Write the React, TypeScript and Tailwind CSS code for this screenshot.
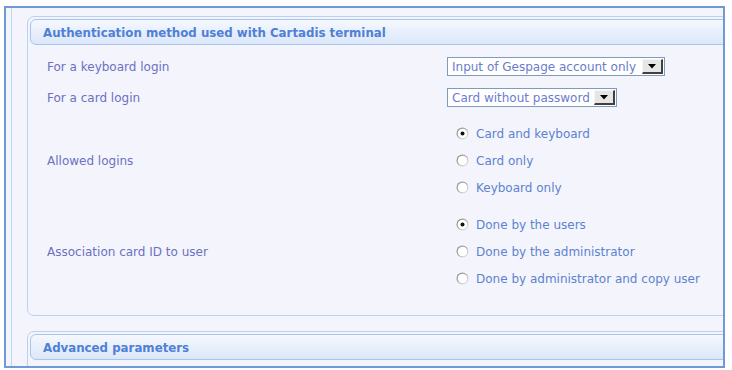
import React from 'react';

const font = { fontFamily: '"DejaVu Sans", Verdana, sans-serif' };

function Radio({ checked }: { checked?: boolean }) {
  return (
    <svg width="13" height="13" viewBox="0 0 13 13" className="shrink-0">
      <defs>
        <linearGradient id="rg" x1="0" y1="0" x2="1" y2="1">
          <stop offset="0" stopColor="#7a7a7a" />
          <stop offset="1" stopColor="#eeeeee" />
        </linearGradient>
      </defs>
      <circle cx="6.5" cy="6.5" r="6" fill="url(#rg)" />
      <circle cx="6.5" cy="6.5" r="4.8" fill="#ffffff" />
      {checked && <circle cx="6.5" cy="6.5" r="2" fill="#111" />}
    </svg>
  );
}

function Select({ value, width }: { value: string; width: number }) {
  return (
    <div
      className="flex h-[19px] items-center border border-[#7f9db9] bg-white"
      style={{ width }}
    >
      <span className="flex-1 truncate pl-[4px] text-[12px] text-[#6b7ccc]">{value}</span>
      <span className="mr-[1px] flex h-[15px] w-[21px] items-center justify-center border-r-2 border-b-2 border-[#404040] border-l border-t border-l-[#f4f4f4] border-t-[#f4f4f4] bg-[#e6e6e6]">
        <svg width="8" height="5" viewBox="0 0 8 5">
          <path d="M0 0 H8 L4 4.5 Z" fill="#000" />
        </svg>
      </span>
    </div>
  );
}

function Header({ title }: { title: string }) {
  return (
    <div className="mx-[2px] mt-[2px] flex h-[26px] items-center rounded-[6px] border border-[#a9c5ee] bg-gradient-to-b from-[#f5f8fe] to-[#dbe7f9] pl-[12px] pt-[3px]">
      <span className="text-[11.8px] font-bold text-[#4f80d6]">{title}</span>
    </div>
  );
}

function RadioGroup({ label, options }: { label: string; options: string[] }) {
  return (
    <div className="flex items-center">
      <div className="w-[419px] pl-[19px] text-[12px] text-[#6b70c2]">{label}</div>
      <div className="flex flex-col pl-[9px]">
        {options.map((o, i) => (
          <div key={o} className="flex h-[27px] items-center gap-[7px]">
            <Radio checked={i === 0} />
            <span className="text-[12px] text-[#5d82d0]">{o}</span>
          </div>
        ))}
      </div>
    </div>
  );
}

export default function App() {
  return (
    <div className="h-[370px] w-[732px] bg-white pl-[4px] pt-[6px]" style={font}>
      <div className="h-[362px] w-[721px] overflow-hidden border-2 border-b-2 border-[#6f9ad6] bg-[#f4f5fc]">
        <div className="ml-[5px] h-full border-l border-[#c3d4ef] pl-[15px] pt-[8px]">
          <div className="w-[740px] rounded-[7px] border border-[#bcd1ef] bg-[#f4f5fc]">
            <Header title="Authentication method used with Cartadis terminal" />
            <div className="pb-[23px] pt-[6px]">
              <div className="flex h-[31px] items-center">
                <div className="w-[419px] pl-[19px] text-[12px] text-[#6b70c2]">For a keyboard login</div>
                <Select value="Input of Gespage account only" width={218} />
              </div>
              <div className="flex h-[31px] items-center">
                <div className="w-[419px] pl-[19px] text-[12px] text-[#6b70c2]">For a card login</div>
                <Select value="Card without password" width={170} />
              </div>
              <div className="mt-[7px]">
                <RadioGroup label="Allowed logins" options={['Card and keyboard', 'Card only', 'Keyboard only']} />
              </div>
              <div className="mt-[10px]">
                <RadioGroup
                  label="Association card ID to user"
                  options={['Done by the users', 'Done by the administrator', 'Done by administrator and copy user']}
                />
              </div>
            </div>
          </div>
          <div className="mt-[15px] h-[60px] w-[740px] rounded-[7px] border border-[#bcd1ef] bg-[#f4f5fc]">
            <Header title="Advanced parameters" />
          </div>
        </div>
      </div>
    </div>
  );
}
